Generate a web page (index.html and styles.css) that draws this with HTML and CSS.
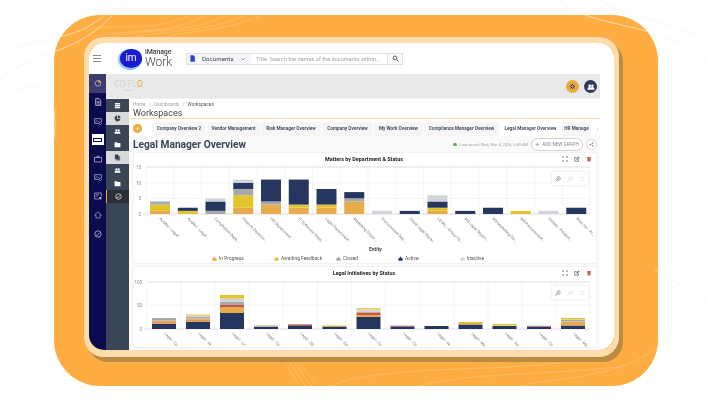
FILE: index.html
```html
<!DOCTYPE html>
<html lang="en">
<head>
  <meta charset="UTF-8" />
  <meta name="viewport" content="width=device-width, initial-scale=1.0"/>
  <title>Legal Manager Overview</title>
  <link rel="stylesheet" href="styles.css">
</head>
<body>
  <!-- icon set -->
  <svg class="sprite" width="0" height="0">
    <symbol id="i-pie" viewBox="0 0 12 12"><path d="M5.4 1a5 5 0 1 0 5.6 5.6H5.4z" fill="currentColor"/><path d="M6.8 0.6a5 5 0 0 1 4.6 4.6H6.8z" fill="currentColor"/></symbol>
    <symbol id="i-doc" viewBox="0 0 12 12"><path d="M2.5 1h5L10 3.5V11H2.5z" fill="none" stroke="currentColor" stroke-width="1.3"/><path d="M4 5h4.5M4 7h4.5M4 9h4.5" stroke="currentColor"/></symbol>
    <symbol id="i-imgcheck" viewBox="0 0 12 12"><path d="M8 9.5H1V2.5h10v5" fill="none" stroke="currentColor"/><path d="M2 8l2.5-3 2 2 1-1" fill="none" stroke="currentColor" stroke-width=".8"/><circle cx="9.5" cy="9.5" r="1.8" fill="none" stroke="currentColor" stroke-width=".8"/></symbol>
    <symbol id="i-case" viewBox="0 0 12 12"><rect x="1" y="3.5" width="10" height="7" fill="none" stroke="currentColor"/><path d="M4.2 3.5V1.8h3.6v1.7" fill="none" stroke="currentColor"/></symbol>
    <symbol id="i-panel" viewBox="0 0 12 12"><path d="M7 10.5H1v-9h10v5" fill="none" stroke="currentColor"/><path d="M2.5 4h5M2.5 6h3" stroke="currentColor" stroke-width=".8"/><rect x="8" y="7.5" width="3" height="3.5" fill="currentColor"/></symbol>
    <symbol id="i-home" viewBox="0 0 12 12"><path d="M6 1.2L11 6H9v4.500H3V6H1z" fill="none" stroke="currentColor" stroke-width=".9"/></symbol>
    <symbol id="i-check" viewBox="0 0 12 12"><circle cx="6" cy="6" r="4.8" fill="none" stroke="currentColor" stroke-width="1.1"/><path d="M3.2 7.2l2 1 3.6-4.4" fill="none" stroke="currentColor" stroke-width="1.1"/></symbol>
    <symbol id="i-list" viewBox="0 0 12 12"><path d="M1.500 1.500h9v2.300h-9zM1.500 4.900h9v2.200h-9zM1.500 8.200h9v2.300h-9z" fill="currentColor"/></symbol>
    <symbol id="i-users" viewBox="0 0 12 12"><circle cx="4" cy="4" r="1.900" fill="currentColor"/><circle cx="8" cy="4" r="1.900" fill="currentColor"/><path d="M.8 10c0-3 1.200-4 3.200-4 1 0 1.600.3 2 .7.4-.4 1-.7 2-.7 2 0 3.200 1 3.200 4z" fill="currentColor"/></symbol>
    <symbol id="i-folder" viewBox="0 0 12 12"><path d="M1 2h4l1 1.400h5V10.500H1z" fill="currentColor"/></symbol>
    <symbol id="i-files" viewBox="0 0 12 12"><path d="M1.500 1h5l1 1v7h-6z" fill="currentColor"/><path d="M4 3.500h5.500l1 1V11H4z" fill="currentColor" opacity=".75"/></symbol>
    <symbol id="i-gear" viewBox="0 0 12 12"><circle cx="6" cy="6" r="2.500" fill="none" stroke="currentColor" stroke-width="1.600"/><path d="M6 1.500v2M6 8.500v2M1.500 6h2M8.500 6h2M2.800 2.800l1.400 1.400M7.800 7.800l1.400 1.400M9.200 2.800L7.800 4.200M4.200 7.800L2.800 9.200" stroke="currentColor" stroke-width="1.300"/></symbol>
    <symbol id="i-search" viewBox="0 0 12 12"><circle cx="5" cy="5" r="3.200" fill="none" stroke="currentColor" stroke-width="1.400"/><path d="M7.500 7.500L11 11" stroke="currentColor" stroke-width="1.600"/></symbol>
    <symbol id="i-zoomin" viewBox="0 0 12 12"><circle cx="7" cy="5" r="3.600" fill="none" stroke="currentColor" stroke-width="1.200"/><path d="M4.400 7.600L1 11" stroke="currentColor" stroke-width="1.600"/><path d="M5.400 5h3.200M7 3.400v3.200" stroke="currentColor" stroke-width=".8"/></symbol>
    <symbol id="i-undo" viewBox="0 0 12 12"><path d="M3 3.500a4 4 0 1 1-.8 3" fill="none" stroke="currentColor" stroke-width="1.100"/><path d="M1.500 1.500L3 4l2.500-.8" fill="none" stroke="currentColor" stroke-width="1"/></symbol>
    <symbol id="i-expand" viewBox="0 0 12 12"><path d="M1.500 4V1.500H4M8 1.500h2.500V4M10.500 8v2.500H8M4 10.500H1.500V8" fill="none" stroke="currentColor" stroke-width="1.200"/></symbol>
    <symbol id="i-edit" viewBox="0 0 12 12"><path d="M9 6.500v4H1.500V3h4" fill="none" stroke="currentColor" stroke-width="1.200"/><path d="M4.500 7.500l.5-2L10 .8l1.200 1.200L6.500 7z" fill="currentColor"/></symbol>
    <symbol id="i-trash" viewBox="0 0 12 12"><path d="M2.500 3h7l-.5 8H3zM2 1.800h8v1H2z" fill="currentColor"/></symbol>
    <symbol id="i-share" viewBox="0 0 12 12"><circle cx="9" cy="2.500" r="1.800" fill="currentColor"/><circle cx="9" cy="9.500" r="1.800" fill="currentColor"/><circle cx="3" cy="6" r="1.800" fill="currentColor"/><path d="M9 2.500L3 6l6 3.500" fill="none" stroke="currentColor"/></symbol>
    <symbol id="i-legend" viewBox="0 0 12 12"><path d="M6 .5L8 5h3v6.500H1V5h3z" fill="currentColor"/></symbol>
  </svg>

  <div class="stage">
    <svg class="contours" viewBox="0 0 708 400" width="708" height="400">
      <g class="lines-white">
        <path d="M0 60C30 30 70 50 110 10"/><path d="M0 80C40 45 80 60 125 0"/><path d="M0 100C40 70 60 90 54 140"/>
        <path d="M560 0C590 30 660 20 708 60"/><path d="M600 0C630 20 670 20 708 40"/><path d="M655 270C680 280 690 300 708 300"/>
        <path d="M300 386C296 392 300 396 306 400"/><path d="M320 386C316 392 322 396 326 400"/>
      </g>
      <g class="lines-orange">
        <path d="M84 30C120 22 150 34 190 15"/><path d="M92 37C130 28 170 36 206 15"/><path d="M110 37C150 28 190 34 226 15"/>
        <path d="M135 37C170 30 210 32 246 15"/><path d="M165 37C195 30 230 30 262 15"/>
        <path d="M285 363C292 372 296 380 300 386"/><path d="M290 363C296 372 301 380 306 386"/><path d="M295 363C301 372 306 380 312 386"/><path d="M300 363C306 372 312 380 319 386"/>
        <path d="M330 386C380 366 470 372 560 363"/><path d="M420 386C470 372 540 376 626 366"/><path d="M520 386C560 376 610 380 655 350"/>
      </g>
    </svg>

    <div class="frame">
      <div class="app">
        <header class="topbar">
          <div class="burger"><span></span><span></span><span></span></div>
          <div class="logo">
            <div class="logo-mark">im</div>
            <div class="logo-text"><span class="logo-top">iManage</span><span class="logo-work">Work</span></div>
          </div>
          <div class="search">
            <div class="search-scope">
              <svg class="doc-blue" viewBox="0 0 12 12"><path d="M2.500 .5h5L10 3v8.500H2.500z" fill="currentColor"/></svg>
              <span>Documents</span>
              <svg class="chev" viewBox="0 0 12 12"><path d="M2.500 4.500L6 8l3.500-3.500" fill="none" stroke="currentColor" stroke-width="1.300"/></svg>
            </div>
            <div class="search-input">Title: Search the names of the documents within...</div>
            <div class="search-btn"><svg class="ic7" viewBox="0 0 12 12"><use href="#i-search"/></svg></div>
          </div>
        </header>

        <div class="shell">
          <nav class="rail">
            <div class="rail-item rail-top">
              <svg class="ic8" viewBox="0 0 12 12"><circle cx="6" cy="6.500" r="4.200" fill="none" stroke="#c9c9dd"/><path d="M6.500 1.500a4.500 4.500 0 0 1 4 4H6.500z" fill="#f0a73c"/></svg>
            </div>
            <div class="rail-item"><svg class="ic8" viewBox="0 0 12 12"><use href="#i-doc"/></svg></div>
            <div class="rail-item"><svg class="ic8" viewBox="0 0 12 12"><use href="#i-imgcheck"/></svg></div>
            <div class="rail-item"><div class="rail-sel"><span></span></div></div>
            <div class="rail-item"><svg class="ic8" viewBox="0 0 12 12"><use href="#i-case"/></svg></div>
            <div class="rail-item"><svg class="ic8" viewBox="0 0 12 12"><use href="#i-imgcheck"/></svg></div>
            <div class="rail-item"><svg class="ic8" viewBox="0 0 12 12"><use href="#i-panel"/></svg></div>
            <div class="rail-item"><svg class="ic8" viewBox="0 0 12 12"><use href="#i-home"/></svg></div>
            <div class="rail-item"><svg class="ic8" viewBox="0 0 12 12"><use href="#i-check"/></svg></div>
          </nav>

          <div class="work">
            <div class="brandbar">
              <div class="coflo"><div class="coflo-name">CO-FL<b>O</b></div><div class="coflo-sub">powered</div></div>
              <div class="brand-actions">
                <div class="round round-gear"><svg class="ic7" viewBox="0 0 12 12"><use href="#i-gear"/></svg></div>
                <div class="round round-users"><svg class="ic8" viewBox="0 0 12 12"><use href="#i-users"/></svg></div>
              </div>
            </div>

            <div class="below">
              <nav class="subnav">
                <div class="sub-item"><svg class="ic7" viewBox="0 0 12 12"><use href="#i-list"/></svg></div>
                <div class="sub-item light"><svg class="ic7" viewBox="0 0 12 12"><use href="#i-pie"/></svg></div>
                <div class="sub-item"><svg class="ic7" viewBox="0 0 12 12"><use href="#i-users"/></svg></div>
                <div class="sub-item"><svg class="ic7" viewBox="0 0 12 12"><use href="#i-folder"/></svg></div>
                <div class="sub-item light"><svg class="ic7" viewBox="0 0 12 12"><use href="#i-files"/></svg></div>
                <div class="sub-item"><svg class="ic7" viewBox="0 0 12 12"><use href="#i-users"/></svg></div>
                <div class="sub-item"><svg class="ic7" viewBox="0 0 12 12"><use href="#i-folder"/></svg></div>
                <div class="sub-item active"><svg class="ic7" viewBox="0 0 12 12"><use href="#i-check"/></svg></div>
              </nav>

              <main class="main">
                <div class="crumbs"><span>Home</span><i>/</i><span>Dashboards</span><i>/</i><b>Workspaces</b></div>
                <h2 class="page-name">Workspaces</h2>

                <div class="tabs">
                  <div class="tab-add">+</div>
                  <div class="tab tab-1">Company Overview 2</div>
                  <div class="tab tab-2">Vendor Management</div>
                  <div class="tab tab-3">Risk Manager Overview</div>
                  <div class="tab tab-4">Company Overview</div>
                  <div class="tab tab-5">My Work Overview</div>
                  <div class="tab tab-6">Compliance Manager Overview</div>
                  <div class="tab tab-7 current">Legal Manager Overview</div>
                  <div class="tab tab-8">HR Manage</div>
                  <svg class="tab-next" viewBox="0 0 12 12"><path d="M4 2l4 4-4 4" fill="none" stroke="currentColor" stroke-width="1.200"/></svg>
                </div>

                <div class="dash">
                  <div class="dash-head">
                    <h1>Legal Manager Overview</h1>
                    <div class="dash-tools">
                      <span class="dot"></span>
                      <span class="saved">Last saved: Wed, Mar 4, 2026, 5:49 AM</span>
                      <div class="add-graph"><span class="plus">+</span>ADD NEW GRAPH</div>
                      <div class="share"><svg class="ic6" viewBox="0 0 12 12"><use href="#i-share"/></svg></div>
                    </div>
                  </div>

                  <section class="card">
                    <div class="card-title">
                      <span>Matters by Department &amp; Status</span>
                      <div class="card-tools">
                        <svg class="ic5" viewBox="0 0 12 12"><use href="#i-expand"/></svg>
                        <svg class="ic5" viewBox="0 0 12 12"><use href="#i-edit"/></svg>
                        <svg class="ic5 red" viewBox="0 0 12 12"><use href="#i-trash"/></svg>
                      </div>
                    </div>
                    <div class="plot">
                      <svg class="chart" viewBox="134 165 462 88" width="462" height="88">
                        <g class="grid">
                          <path d="M146 183H590M146 198.500H590"/>
                          <path d="M146 167V214M173.800 167V214M201.500 167V214M229.300 167V214M257 167V214M284.800 167V214M312.500 167V214M340.300 167V214M368 167V214M395.800 167V214M423.500 167V214M451.300 167V214M479 167V214M506.800 167V214M534.500 167V214M562.300 167V214M590 167V214"/>
                        </g>
                        <path class="axis" d="M146 167H590M143 214H590"/>
                        <g class="ticks">
                          <text x="141" y="168.500">15</text><text x="141" y="184.500">10</text><text x="141" y="200">5</text><text x="141" y="215.500">0</text>
                        </g>
                        <g transform="translate(146 214) scale(1 -3.130)">
                          <rect class="prog" x="4" y="0" width="20" height="1"/><rect class="wait" x="4" y="1" width="20" height="2"/><rect class="closed" x="4" y="3" width="20" height="1"/>
                          <rect class="wait" x="31.750" y="0" width="20" height="1"/><rect class="act" x="31.750" y="1" width="20" height="1"/>
                          <rect class="closed" x="59.500" y="0" width="20" height="1"/><rect class="act" x="59.500" y="1" width="20" height="3"/><rect class="inact" x="59.500" y="4" width="20" height="1"/>
                          <rect class="prog" x="87.250" y="0" width="20" height="2"/><rect class="wait" x="87.250" y="2" width="20" height="4"/><rect class="closed" x="87.250" y="6" width="20" height="2"/><rect class="act" x="87.250" y="8" width="20" height="2"/><rect class="inact" x="87.250" y="10" width="20" height="1"/>
                          <rect class="prog" x="115" y="0" width="20" height="3"/><rect class="closed" x="115" y="3" width="20" height="1"/><rect class="act" x="115" y="4" width="20" height="7"/>
                          <rect class="prog" x="142.750" y="0" width="20" height="2"/><rect class="wait" x="142.750" y="2" width="20" height="1"/><rect class="act" x="142.750" y="3" width="20" height="8"/>
                          <rect class="prog" x="170.500" y="0" width="20" height="2"/><rect class="wait" x="170.500" y="2" width="20" height="1"/><rect class="act" x="170.500" y="3" width="20" height="5"/>
                          <rect class="prog" x="198.250" y="0" width="20" height="4"/><rect class="closed" x="198.250" y="4" width="20" height="1"/><rect class="act" x="198.250" y="5" width="20" height="2"/>
                          <rect class="inact" x="226" y="0" width="20" height="1"/>
                          <rect class="act" x="253.750" y="0" width="20" height="1"/>
                          <rect class="prog" x="281.500" y="0" width="20" height="1"/><rect class="wait" x="281.500" y="1" width="20" height="1"/><rect class="act" x="281.500" y="2" width="20" height="2"/><rect class="inact" x="281.500" y="4" width="20" height="2"/>
                          <rect class="act" x="309.250" y="0" width="20" height="1"/>
                          <rect class="act" x="337" y="0" width="20" height="2"/>
                          <rect class="wait" x="364.750" y="0" width="20" height="1"/>
                          <rect class="inact" x="392.500" y="0" width="20" height="1"/>
                          <rect class="act" x="420.250" y="0" width="20" height="2"/>
                        </g>
                        <g class="cats">
                          <text x="159" y="219" transform="rotate(45 159 219)">Auditor - Legal...</text>
                          <text x="187" y="219" transform="rotate(45 187 219)">Auditor - Legal...</text>
                          <text x="214" y="219" transform="rotate(45 214 219)">Compliance Depa...</text>
                          <text x="242" y="219" transform="rotate(45 242 219)">Finance Departm...</text>
                          <text x="270" y="219" transform="rotate(45 270 219)">HR Department</text>
                          <text x="298" y="219" transform="rotate(45 298 219)">IT Outhouse Depa...</text>
                          <text x="325" y="219" transform="rotate(45 325 219)">Legal Department</text>
                          <text x="353" y="219" transform="rotate(45 353 219)">Marketing Depar...</text>
                          <text x="381" y="219" transform="rotate(45 381 219)">Procurement Dep...</text>
                          <text x="409" y="219" transform="rotate(45 409 219)">Client Legal Depar...</text>
                          <text x="437" y="219" transform="rotate(45 437 219)">LEGAL - Group Fu...</text>
                          <text x="464" y="219" transform="rotate(45 464 219)">MS Legal Depart...</text>
                          <text x="492" y="219" transform="rotate(45 492 219)">MS Marketing De...</text>
                          <text x="520" y="219" transform="rotate(45 520 219)">MS Procurement...</text>
                          <text x="548" y="219" transform="rotate(45 548 219)">Senate - Product...</text>
                          <text x="576" y="219" transform="rotate(45 576 219)">Bias, Inc - Pr...</text>
                        </g>
                        <text class="axis-name" x="369" y="251">Entity</text>
                      </svg>
                      <div class="zoombox">
                        <svg class="ic5" viewBox="0 0 12 12"><use href="#i-zoomin"/></svg>
                        <svg class="ic5 faint" viewBox="0 0 12 12"><use href="#i-zoomin"/></svg>
                        <svg class="ic5 faint" viewBox="0 0 12 12"><use href="#i-undo"/></svg>
                      </div>
                    </div>
                    <div class="legend">
                      <div class="legend-item"><svg class="ic5 c-prog" viewBox="0 0 12 12"><use href="#i-legend"/></svg>In Progress</div>
                      <div class="legend-item"><svg class="ic5 c-wait" viewBox="0 0 12 12"><use href="#i-legend"/></svg>Awaiting Feedback</div>
                      <div class="legend-item"><svg class="ic5 c-closed" viewBox="0 0 12 12"><use href="#i-legend"/></svg>Closed</div>
                      <div class="legend-item"><svg class="ic5 c-act" viewBox="0 0 12 12"><use href="#i-legend"/></svg>Active</div>
                      <div class="legend-item"><svg class="ic5 c-inact" viewBox="0 0 12 12"><use href="#i-legend"/></svg>Inactive</div>
                    </div>
                  </section>

                  <section class="card">
                    <div class="card-title">
                      <span>Legal Initiatives by Status</span>
                      <div class="card-tools">
                        <svg class="ic5" viewBox="0 0 12 12"><use href="#i-expand"/></svg>
                        <svg class="ic5" viewBox="0 0 12 12"><use href="#i-edit"/></svg>
                        <svg class="ic5 red" viewBox="0 0 12 12"><use href="#i-trash"/></svg>
                      </div>
                    </div>
                    <div class="plot">
                      <svg class="chart" viewBox="134 283 462 68" width="462" height="68">
                        <g class="grid">
                          <path d="M147 309H590"/>
                          <path d="M147 286V333M181 286V333M215 286V333M249.300 286V333M283.300 286V333M317.500 286V333M351.500 286V333M385.500 286V333M420 286V333M454 286V333M488 286V333M522 286V333M556 286V333M590 286V333"/>
                        </g>
                        <path class="axis" d="M147 286H590M144 333H590"/>
                        <g class="ticks">
                          <text x="142" y="287.500">100</text><text x="142" y="310.500">50</text><text x="142" y="334.500">0</text>
                        </g>
                        <g transform="translate(147 333) scale(1 -1)">
                          <rect class="act" x="5" y="0" width="24" height="5"/><rect class="prog" x="5" y="5" width="24" height="1.500"/><rect class="red" x="5" y="6.500" width="24" height="1"/><rect class="prog" x="5" y="7.500" width="24" height="1"/><rect class="closed" x="5" y="8.500" width="24" height="2.500"/>
                          <rect class="act" x="39" y="0" width="24" height="7"/><rect class="prog" x="39" y="7" width="24" height="1.500"/><rect class="red" x="39" y="8.500" width="24" height="1"/><rect class="prog" x="39" y="9.500" width="24" height="1"/><rect class="closed" x="39" y="10.500" width="24" height="2"/><rect class="inact" x="39" y="12.500" width="24" height="1"/><rect class="wait" x="39" y="13.500" width="24" height="1"/>
                          <rect class="act" x="73" y="0" width="24" height="16"/><rect class="prog" x="73" y="16" width="24" height="6"/><rect class="red" x="73" y="22" width="24" height="2"/><rect class="closed" x="73" y="24" width="24" height="3"/><rect class="inact" x="73" y="27" width="24" height="3.500"/><rect class="wait" x="73" y="30.500" width="24" height="3.500"/>
                          <rect class="act" x="107" y="0" width="24" height="2.300"/><rect class="prog" x="107" y="2.300" width="24" height=".5"/><rect class="closed" x="107" y="2.800" width="24" height=".7"/>
                          <rect class="act" x="141" y="0" width="24" height="3"/><rect class="red" x="141" y="3" width="24" height="1"/><rect class="closed" x="141" y="4" width="24" height="1"/>
                          <rect class="act" x="175.500" y="0" width="24" height="2.500"/><rect class="wait" x="175.500" y="2.500" width="24" height="1"/>
                          <rect class="act" x="209.500" y="0" width="24" height="12"/><rect class="prog" x="209.500" y="12" width="24" height="2"/><rect class="red" x="209.500" y="14" width="24" height="2.500"/><rect class="closed" x="209.500" y="16.500" width="24" height="1"/><rect class="inact" x="209.500" y="17.500" width="24" height="2"/><rect class="wait" x="209.500" y="19.500" width="24" height="1.300"/>
                          <rect class="act" x="243.500" y="0" width="24" height="2.500"/><rect class="red" x="243.500" y="2.500" width="24" height=".5"/><rect class="closed" x="243.500" y="3" width="24" height=".5"/>
                          <rect class="act" x="277.500" y="0" width="24" height="3"/>
                          <rect class="act" x="311.500" y="0" width="24" height="4.500"/><rect class="prog" x="311.500" y="4.500" width="24" height="1.500"/><rect class="wait" x="311.500" y="6" width="24" height="1"/>
                          <rect class="act" x="345.500" y="0" width="24" height="3"/><rect class="inact" x="345.500" y="3" width="24" height=".5"/><rect class="wait" x="345.500" y="3.500" width="24" height="1.500"/>
                          <rect class="act" x="380" y="0" width="24" height="2.300"/><rect class="red" x="380" y="2.300" width="24" height=".6"/><rect class="inact" x="380" y="2.900" width="24" height=".7"/>
                          <rect class="act" x="414" y="0" width="24" height="3.500"/><rect class="prog" x="414" y="3.500" width="24" height="4"/><rect class="closed" x="414" y="7.500" width="24" height="1.500"/><rect class="inact" x="414" y="9" width="24" height=".5"/><rect class="wait" x="414" y="9.500" width="24" height="1.500"/>
                        </g>
                        <g class="cats">
                          <text x="164" y="338" transform="rotate(45 164 338)">Legal - Co</text>
                          <text x="198" y="338" transform="rotate(45 198 338)">Legal - Ini</text>
                          <text x="232" y="338" transform="rotate(45 232 338)">Legal - Lit</text>
                          <text x="266" y="338" transform="rotate(45 266 338)">Legal - Co</text>
                          <text x="300" y="338" transform="rotate(45 300 338)">Legal - Ob</text>
                          <text x="334" y="338" transform="rotate(45 334 338)">Legal - Go</text>
                          <text x="368" y="338" transform="rotate(45 368 338)">Legal - Co</text>
                          <text x="403" y="338" transform="rotate(45 403 338)">Legal - Co</text>
                          <text x="437" y="338" transform="rotate(45 437 338)">Legal - Ini</text>
                          <text x="471" y="338" transform="rotate(45 471 338)">Legal - Me</text>
                          <text x="505" y="338" transform="rotate(45 505 338)">Legal - Ins</text>
                          <text x="539" y="338" transform="rotate(45 539 338)">Legal - Co</text>
                          <text x="573" y="338" transform="rotate(45 573 338)">Legal - Me</text>
                        </g>
                      </svg>
                      <div class="zoombox">
                        <svg class="ic5" viewBox="0 0 12 12"><use href="#i-zoomin"/></svg>
                        <svg class="ic5 faint" viewBox="0 0 12 12"><use href="#i-zoomin"/></svg>
                        <svg class="ic5 faint" viewBox="0 0 12 12"><use href="#i-undo"/></svg>
                      </div>
                    </div>
                  </section>
                </div>
              </main>
            </div>
          </div>
        </div>
      </div>
    </div>
  </div>
</body>
</html>
```

FILE: styles.css
```css
* { box-sizing: border-box; }

body {
  margin: 0;
  width: 708px; height: 400px;
  overflow: hidden;
  background: #fff;
  font-family: Roboto, "Liberation Sans", sans-serif;
  color: #3b4556;
}

.sprite { position: absolute; }

.ic5 { width: 6px; height: 6px; display: block; }
.ic6 { width: 6px; height: 6px; display: block; }
.ic7 { width: 7px; height: 7px; display: block; }
.ic8 { width: 8px; height: 8px; display: block; }

/* orange backdrop */
.stage {
  position: relative;
  width: 604px; height: 371px;
  margin: 15px 0 0 54px;
  padding: 22px 0 0 30px;
  background: #fdad42;
  border-radius: 46px;
}
.contours {
  position: absolute;
  left: -54px; top: -15px;
  pointer-events: none;
}
.contours path { fill: none; stroke-width: .6; }
.lines-white path { stroke: #f3f3f3; }
.lines-orange path { stroke: #fec67a; }

.frame {
  position: relative;
  width: 535px; height: 320px;
  border-style: solid;
  border-color: #fddcae;
  border-width: 6px 5px 7px 5px;
  border-radius: 20px;
  box-shadow: 4px 5px 0 #b98c45;
}
.app {
  width: 525px; height: 307px;
  background: #fff;
  border-radius: 15px;
  overflow: hidden;
  filter: blur(.45px);
}

/* top bar */
.topbar {
  height: 31px;
  display: flex;
  align-items: center;
}
.burger { width: 17px; margin-left: 4px; display: flex; flex-direction: column; gap: 2px; }
.burger span { display: block; width: 8px; height: 1px; background: #888; }

.logo { display: flex; align-items: center; width: 66px; margin-left: 10px; }
.logo-mark {
  width: 22px; height: 19px;
  border-radius: 50% 45% 50% 50%;
  background: #1b1bd0;
  box-shadow: -1px 1px 0 1px #8ccaf5;
  color: #fff;
  font-size: 10px; font-weight: 400;
  text-align: center; line-height: 18px;
}
.logo-text { margin-left: 3px; display: flex; flex-direction: column; line-height: 1; }
.logo-top { font-size: 7px; font-weight: 500; color: #444; letter-spacing: -.1px; }
.logo-work { font-size: 12px; font-weight: 300; color: #444; }

.search {
  display: flex;
  width: 217px; height: 12px;
  border: 1px solid #e2e2e2;
  font-size: 5.6px;
}
.search-scope {
  width: 64px;
  display: flex; align-items: center;
  background: #f4f5f8;
  color: #444;
}
.doc-blue { width: 7px; height: 7px; margin-left: 2px; color: #2b3fd6; }
.search-scope span { margin-left: 6px; font-size: 6.2px; }
.chev { width: 6px; height: 6px; margin-left: 6px; color: #666; }
.search-input { flex: 1; padding-left: 5px; line-height: 10px; color: #a5a5a5; white-space: nowrap; overflow: hidden; }
.search-btn { width: 15px; display: flex; align-items: center; justify-content: center; border-left: 1px solid #e2e2e2; background: #f9f9f9; color: #444; }

/* layout below top bar */
.shell { display: flex; height: 276px; }

.rail { width: 17px; background: #0b0b50; color: #c9c9dd; }
.rail-item { height: 18.8px; display: flex; align-items: center; justify-content: center; }
.rail-top { background: #3c3c70; }
.rail-sel { width: 12px; height: 11px; background: #fff; display: flex; align-items: center; justify-content: center; }
.rail-sel span { width: 9px; height: 4px; border: 1px solid #0b0b50; }

.work { flex: 1; padding-right: 14px; display: flex; flex-direction: column; min-width: 0; }

.brandbar {
  height: 25px;
  background: #e9e9e9;
  border-bottom: 1px solid #f0f0f0;
  display: flex; align-items: center; justify-content: space-between;
  padding: 0 3px 0 8px;
}
.coflo { line-height: 1; color: #cdcdcd; }
.coflo-name { font-size: 8.5px; font-weight: 300; }
.coflo-name b { color: #e8ab3c; font-weight: 400; }
.coflo-sub { font-size: 2.5px; color: #e8c078; text-align: center; margin-top: 1px; }
.brand-actions { display: flex; gap: 5px; margin-top: 1px; }
.round { width: 13px; height: 13px; border-radius: 50%; display: flex; align-items: center; justify-content: center; }
.round-gear { background: #e8ab3c; color: #2f3b55; }
.round-users { background: #2f3b55; color: #fff; }

.below { flex: 1; display: flex; min-height: 0; }

.subnav { width: 23px; background: #3a4556; color: #fff; }
.sub-item { height: 13px; display: flex; align-items: center; justify-content: center; }
.sub-item.light { background: #d9d9d9; color: #3a4556; }
.sub-item.active { background: #2a2e37; border-left: 1px solid #e8ab3c; }

/* main column */
.main { flex: 1; min-width: 0; overflow: hidden; }

.crumbs {
  height: 10px; padding-left: 4px;
  display: flex; align-items: center;
  font-size: 4.8px; color: #a9a9a9;
}
.crumbs i { font-style: normal; margin: 0 3px; }
.crumbs b { font-weight: 400; color: #555; }

.page-name {
  height: 10px; margin: 0;
  padding-left: 4px;
  border-bottom: 1px solid #fddcae;
  font-size: 9px; font-weight: 400; line-height: 8px;
  color: #444;
}

.tabs {
  height: 14px; margin-top: 3px;
  display: flex; align-items: stretch;
  font-size: 4.7px; font-weight: 700; color: #46505f;
  padding-left: 4px;
}
.tab-add {
  width: 9px; height: 9px; margin-top: 2px; margin-right: 10px;
  border-radius: 50%;
  background: #e8ab3c; color: #fff;
  font-size: 8px; font-weight: 400; line-height: 9px; text-align: center;
  flex: none;
}
.tab {
  flex: none;
  margin-right: 1px;
  background: #f5f5f5;
  border-radius: 3px 3px 0 0;
  text-align: center; line-height: 14px;
  white-space: nowrap; overflow: hidden;
}
.tab.current { background: #fff; }
.tab-1 { width: 54px; }
.tab-2 { width: 53px; }
.tab-3 { width: 60px; }
.tab-4 { width: 51px; }
.tab-5 { width: 49px; }
.tab-6 { width: 75px; }
.tab-7 { width: 61px; }
.tab-8 { width: 29px; }
.tab-next { width: 5px; height: 5px; margin: 5px 0 0 3px; color: #aaa; flex: none; }

.dash { background: #fafafa; padding: 0 4px 0 5px; height: 214px; }
.dash-head { height: 17px; display: flex; align-items: center; justify-content: space-between; margin-left: -1px; margin-right: -1px; }
.dash-head h1 { margin: 0; font-size: 10.2px; font-weight: 700; color: #3b4556; }
.dash-tools { display: flex; align-items: center; }
.dot { width: 3.5px; height: 3.5px; border-radius: 50%; background: #6aae45; margin-right: 3px; }
.saved { font-size: 4px; color: #a0a0a0; margin-right: 3px; }
.add-graph {
  width: 52px; height: 13px;
  border: 1px solid #d0d0d0; border-radius: 7px;
  background: #fff;
  font-size: 4.6px; color: #888; line-height: 11px;
  text-align: center;
  white-space: nowrap;
}
.plus { font-size: 7px; margin-right: 3px; vertical-align: -.5px; }
.share {
  width: 11px; height: 11px; margin-left: 3px;
  border: 1px solid #d8d8d8; border-radius: 50%;
  background: #fff; color: #4c9a52;
  display: flex; align-items: center; justify-content: center;
}
.share .ic6 { width: 5px; height: 5px; }

/* chart cards */
.card {
  background: #fff;
  box-shadow: 0 0 0 1px #f1f1f1;
  margin-bottom: 4px;
}
.card-title {
  position: relative;
  height: 12px;
  padding-right: 2px;
  font-size: 5.4px; font-weight: 700; color: #222;
  line-height: 12px; text-align: center;
}
.card-title > span { display: block; }
.card-tools {
  position: absolute; right: 4px; top: 3px;
  display: flex; gap: 6px;
  color: #444;
}
.card-tools .red { color: #c9655a; }

.plot { position: relative; }
.chart { display: block; }
.zoombox {
  position: absolute;
  right: 8px; top: 7px;
  width: 36px; height: 13px;
  background: rgba(255,255,255,.8);
  box-shadow: 0 0 3px rgba(0,0,0,.12);
  display: flex; align-items: center; justify-content: center; gap: 6px;
  color: #777;
}
.zoombox .faint { color: #ddd; }

.grid path { stroke: #f2f2f2; stroke-width: .8; fill: none; }
.axis { stroke: #d6d6d6; stroke-width: .8; fill: none; }
.ticks text { font-size: 4.5px; fill: #8a8a8a; text-anchor: end; }
.cats text { font-size: 4px; fill: #777; }
.axis-name { font-size: 5px; font-weight: 700; fill: #444; }

.prog { fill: #e8ab4a; }
.wait { fill: #e3c42c; }
.closed { fill: #a9a9a9; }
.act { fill: #25375e; }
.inact { fill: #d1d4da; }
.red { fill: #c9524a; }

.legend {
  height: 10px;
  display: grid;
  grid-template-columns: repeat(5, 62px);
  padding-left: 78px;
  align-items: center;
  font-size: 4.9px; color: #555;
}
.legend-item { display: flex; align-items: center; gap: 2px; }
.legend-item .ic5 { width: 5px; height: 5px; }
.c-prog { color: #e8ab4a; }
.c-wait { color: #e3c42c; }
.c-closed { color: #a9a9a9; }
.c-act { color: #25375e; }
.c-inact { color: #d1d4da; }
```
